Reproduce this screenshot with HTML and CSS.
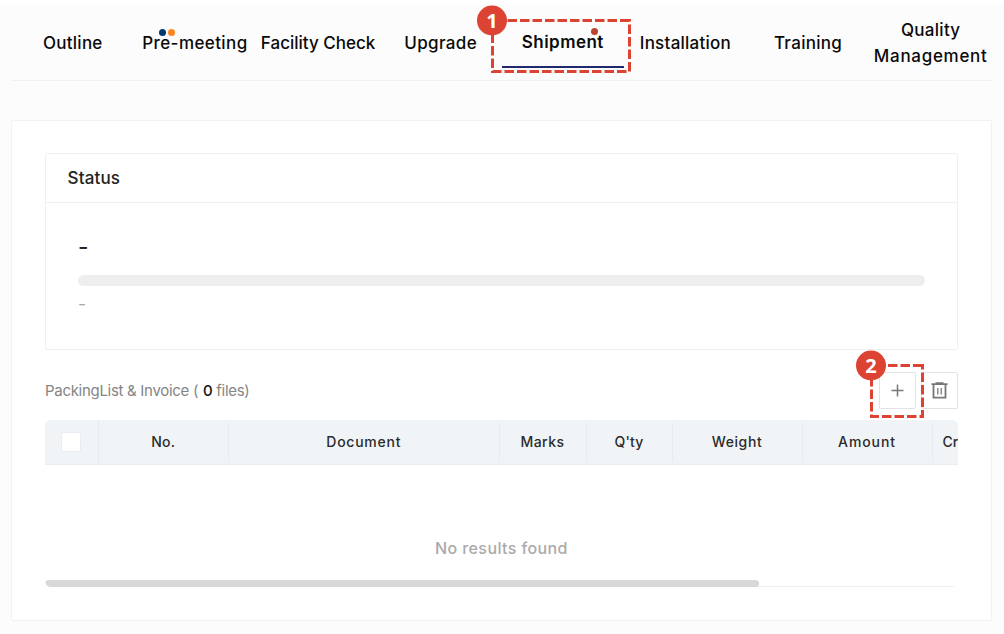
FILE: index.html
```html
<!DOCTYPE html>
<html lang="en">
<head>
<meta charset="utf-8">
<title>Shipment</title>
<link rel="stylesheet" href="styles.css">
</head>
<body>
<nav class="tabs">
  <a class="tab"><span class="t-outline">Outline</span></a>
  <a class="tab"><span class="t-pre">Pre-meeting</span><i class="dots"><b class="dot navy"></b><b class="dot orange"></b></i></a>
  <a class="tab"><span class="t-facility">Facility Check</span></a>
  <a class="tab"><span class="t-upgrade">Upgrade</span></a>
  <a class="tab active"><span class="t-shipment">Shipment</span><i class="dots single"><b class="dot red"></b></i></a>
  <a class="tab"><span class="t-install">Installation</span></a>
  <a class="tab"><span class="t-training">Training</span></a>
  <a class="tab"><span class="t-quality">Quality</span><span class="t-manage">Management</span></a>
</nav>
<main class="card">
  <section class="status">
    <h2 class="status-title"><span>Status</span></h2>
    <div class="status-body">
      <p class="step"><span>-</span></p>
      <div class="progress"></div>
      <p class="date"><span>-</span></p>
    </div>
  </section>
  <div class="toolbar">
    <p class="caption">PackingList &amp; Invoice ( <b class="count">0</b> files)</p>
    <div class="buttons">
      <button class="btn" aria-label="Add"><svg width="35" height="35" viewBox="0 0 35 35"><path d="M11.500 17.500h12M17.500 11.500v12" stroke="#777" stroke-width="1.5" fill="none"/></svg></button>
      <button class="btn" aria-label="Delete"><svg width="35" height="35" viewBox="0 0 35 35" fill="none" stroke="#777"><path d="M9.500 11.2h16M13.500 10h8" stroke-width="1.7"/><path d="M11.500 11.5v13.200h12V11.5" stroke-width="1.8"/><path d="M15.800 15v6.5M19.200 15v6.500" stroke-width="1.3"/></svg></button>
    </div>
  </div>
  <div class="table">
    <div class="thead">
      <div class="th check"><i class="box"></i></div>
      <div class="th"><span>No.</span></div>
      <div class="th"><span>Document</span></div>
      <div class="th"><span>Marks</span></div>
      <div class="th"><span>Q'ty</span></div>
      <div class="th"><span>Weight</span></div>
      <div class="th"><span>Amount</span></div>
      <div class="th last"><span>Cr</span></div>
    </div>
    <div class="empty"><span>No results found</span></div>
    <div class="scroll"><div class="thumb"></div></div>
  </div>
</main>
<svg class="callouts" width="1004" height="634" viewBox="0 0 1004 634">
  <g fill="none" stroke="#dd4332" stroke-width="3" stroke-dasharray="9.5 3">
    <path d="M629.5 20.500H492.500V71.500H629.500Z"/>
    <path d="M922.500 365.500H871.500V416.500H922.500Z"/>
  </g>
  <g fill="#dd4332"><circle cx="492" cy="20.500" r="15"/><circle cx="871" cy="365.500" r="15"/></g>
  <g class="numbers"><text x="492" y="27.500">1</text><text x="871" y="372.500">2</text></g>
</svg>
</body>
</html>
```
FILE: styles.css
```css
* { box-sizing: border-box; }
body { margin: 0; width: 1004px; height: 634px; overflow: hidden; background: #fcfcfc; border-top: 4px solid #fff; font-family: Inter, "Noto Sans", sans-serif; color: #222; }
p, h2 { margin: 0; }
.tabs { display: grid; grid-template-columns: repeat(8, 1fr); margin: 0 12px 0 11px; height: 77px; border-bottom: 1px solid #f0f0f0; }
.tab { position: relative; display: flex; flex-direction: column; align-items: center; justify-content: center; height: 78px; font-size: 17px; line-height: 26px; font-weight: 500; color: #0a0a0a; white-space: nowrap; }
.t-outline { letter-spacing: .25px; padding-left: 1px; }
.t-pre { letter-spacing: .4px; }
.t-facility { padding-left: 1px; }
.t-upgrade { letter-spacing: .35px; padding-left: 1px; }
.t-shipment { letter-spacing: .45px; }
.t-install { letter-spacing: .25px; }
.t-training { letter-spacing: .3px; }
.t-quality { letter-spacing: .3px; }
.t-manage { letter-spacing: .7px; }
.active { height: 64px; padding-top: 14px; border-bottom: 2px solid #21296b; font-weight: 600; }
.dots { position: absolute; left: 25px; top: 25px; display: flex; gap: 2px; }
.single { left: 89px; top: 24px; }
.dot { width: 7px; height: 7px; border-radius: 50%; }
.navy { background: #063970; }
.orange { background: #ff8420; }
.red { background: #b9452f; }
.card { margin: 39px 12px 0 11px; height: 501px; padding: 32px 33px; background: #fff; border: 1px solid #f2f2f2; border-radius: 2px; }
.status { height: 197px; border: 1px solid #f0f0f0; border-radius: 2px; }
.status-title { height: 49px; padding: 0 21.5px; border-bottom: 1px solid #f0f0f0; font-size: 17px; line-height: 48px; font-weight: 500; letter-spacing: .15px; }
.status-body { padding: 29px 32px 0 32px; }
.step { font-size: 18px; line-height: 30px; font-weight: 600; }
.step span, .date span { display: inline-block; transform: scaleX(1.25); transform-origin: left; }
.progress { height: 11px; margin-top: 13px; border-radius: 6px; background: #eee; }
.date { font-size: 14px; line-height: 30px; margin-top: 3px; color: #aaa; font-weight: 500; }
.toolbar { display: flex; justify-content: space-between; align-items: center; height: 37px; margin-top: 22px; }
.caption { font-size: 15px; color: #858585; letter-spacing: -.3px; }
.count { color: #111; font-weight: 500; padding-left: 1px; }
.buttons { display: flex; gap: 5px; }
.btn { width: 37px; height: 37px; padding: 0; border: 1px solid #e2e2e2; border-radius: 2px; background: #fff; display: grid; place-items: center; }
.btn svg { display: block; }
.table { margin-top: 11px; overflow: hidden; border-radius: 6px; }
.thead { display: grid; grid-template-columns: 53.500px 130.500px 270.500px 87px 86px 130px 130px 25.500px; height: 45px; background: #f0f4f7; border-bottom: 1px solid #eaeef0; overflow: hidden; }
.th { display: flex; align-items: center; justify-content: center; margin: 3px 0 2px; padding-bottom: 3px; border-right: 1px solid #e3ecf0; font-size: 14px; font-weight: 500; letter-spacing: .25px; color: #2b2b2b; white-space: nowrap; }
.th:nth-child(3) { letter-spacing: .75px; }
.th:nth-child(7) { letter-spacing: .9px; }
.th:nth-child(6) { letter-spacing: .6px; }
.th:nth-child(4) { letter-spacing: .5px; }
.check { margin: 0; padding: 0; }
.box { width: 20px; height: 20px; border: 1px solid #e8edf3; border-radius: 2px; background: #fff; }
.th.last { border: 0; justify-content: flex-start; padding-left: 10px; letter-spacing: 0; overflow: hidden; }
.empty { height: 115px; padding-top: 67px; line-height: 32px; text-align: center; font-size: 16px; font-weight: 500; letter-spacing: .4px; color: #aaa; }
.scroll { height: 7px; border-bottom: 1px solid #f0f0f0; border-radius: 0 0 4px 4px; }
.thumb { width: 714px; height: 7px; border-radius: 4px; background: #d8d8d8; }
.callouts { position: absolute; left: 0; top: 0; pointer-events: none; }
.numbers { fill: #fff; font: 700 20px "Noto Sans", sans-serif; text-anchor: middle; }
```
